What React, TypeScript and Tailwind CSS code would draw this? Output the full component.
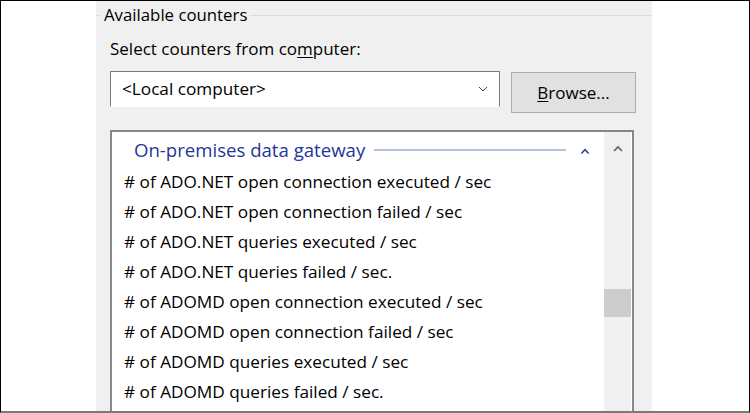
import React from 'react';

const items = [
  '# of ADO.NET open connection executed / sec',
  '# of ADO.NET open connection failed / sec',
  '# of ADO.NET queries executed / sec',
  '# of ADO.NET queries failed / sec.',
  '# of ADOMD open connection executed / sec',
  '# of ADOMD open connection failed / sec',
  '# of ADOMD queries executed / sec',
  '# of ADOMD queries failed / sec.',
];

const App = () => {
  return (
    <div
      className="w-[750px] h-[413px] overflow-hidden bg-white border-l border-t border-r border-black border-b-2 border-b-[#7a7a7a] flex text-black"
      style={{ fontFamily: '"Open Sans", "Noto Sans", sans-serif' }}
    >
      <div className="w-[95px] shrink-0" />

      {/* Panel */}
      <div className="w-[556px] shrink-0 bg-[#f0f0f0] flex flex-col overflow-hidden">
        {/* Group box header */}
        <div className="flex items-center h-[30px] pb-[1px]">
          <div className="w-[5px] h-px bg-[#dcdcdc]" />
          <span className="px-[3px] text-[16.8px] leading-none">Available counters</span>
          <div className="flex-1 h-px bg-[#dcdcdc]" />
        </div>

        <div className="pl-[14px] mt-[8px] text-[17px] leading-[20px]">
          Select counters from co<span className="underline underline-offset-2">m</span>puter:
        </div>

        <div className="flex items-start pl-[14px] mt-[12px]">
          <div className="w-[390px] h-[36px] bg-white border border-[#7a7a7a] border-b-white flex items-center justify-between pl-[11px] pr-[10px] text-[17.2px]">
            <span>&lt;Local computer&gt;</span>
            <svg width="10" height="6" viewBox="0 0 10 6" className="mr-[1px]">
              <path d="M1 1 L5 5 L9 1" fill="none" stroke="#444" strokeWidth="1" />
            </svg>
          </div>
          <button className="ml-[11px] mt-[1px] w-[125px] h-[41px] bg-[#e1e1e1] border border-[#adadad] text-[17px] flex items-center justify-center">
            <span>
              <span className="underline underline-offset-2">B</span>rowse...
            </span>
          </button>
        </div>

        {/* List box */}
        <div className="ml-[14px] mt-[17px] w-[524px] flex-1 border-2 border-b-0 border-[#828790] bg-white flex overflow-hidden">
          <div className="flex-1 pt-[2px]">
            <div className="h-[32px] flex items-center pl-[22px] pr-[14px]">
              <span className="text-[18.6px] text-[#23369a] whitespace-nowrap">On-premises data gateway</span>
              <div className="flex-1 h-[2px] bg-[#b4c2e2] ml-[9px] mr-[14px]" />
              <svg width="10" height="7" viewBox="0 0 10 7">
                <path d="M0.5 6.5 L5 1.5 L9.5 6.5 L7.5 6.5 L5 3.8 L2.5 6.5 Z" fill="#23369a" />
              </svg>
            </div>
            <div className="pt-[1px]">
              {items.map((t) => (
                <div key={t} className="h-[30px] flex items-center pl-[12px] text-[17.2px] whitespace-nowrap">
                  {t}
                </div>
              ))}
            </div>
          </div>
          <div className="w-[27px] bg-[#f0f0f0] flex flex-col items-center mr-[1px]">
            <svg width="10" height="7" viewBox="0 0 10 7" className="mt-[13px]">
              <path d="M1 6 L5 2 L9 6" fill="none" stroke="#606060" strokeWidth="1.6" />
            </svg>
            <div className="mt-[137px] w-full h-[28px] bg-[#cdcdcd]" />
          </div>
        </div>
      </div>

      <div className="flex-1" />
    </div>
  );
};

export default App;
